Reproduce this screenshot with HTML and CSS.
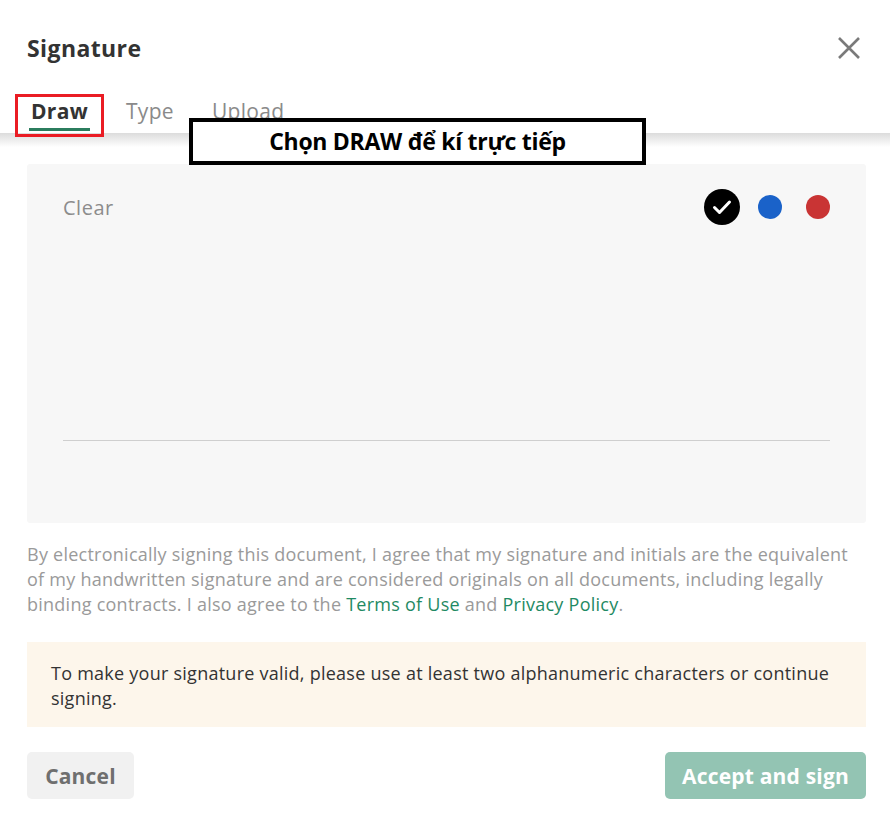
FILE: index.html
```html
<!DOCTYPE html>
<html>
<head>
<meta charset="utf-8">
<link rel="stylesheet" href="styles.css">
</head>
<body>
<div class="dialog">
  <div class="header">
    <h1 class="title">Signature</h1>
    <button class="close" aria-label="Close">
      <svg width="24" height="24" viewBox="0 0 24 24"><path d="M2 2 L22 22 M22 2 L2 22" stroke="#7a7a7a" stroke-width="2.6" fill="none"/></svg>
    </button>
  </div>
  <div class="tabs">
    <div class="tab active">Draw</div>
    <div class="tab">Type</div>
    <div class="tab">Upload</div>
    <div class="note-red"></div>
    <div class="note-box">Chọn DRAW để kí trực tiếp</div>
  </div>
  <div class="tab-shadow"></div>
  <div class="content">
    <div class="pad">
      <div class="pad-top">
        <span class="clear">Clear</span>
        <div class="colors">
          <span class="slot"><span class="dot black"><svg width="36" height="36" viewBox="0 0 36 36"><path d="M10.5 18.5 L15.5 23.5 L25.5 13" stroke="#fff" stroke-width="3" fill="none" stroke-linecap="round" stroke-linejoin="round"/></svg></span></span>
          <span class="slot"><span class="dot blue"></span></span>
          <span class="slot"><span class="dot red"></span></span>
        </div>
      </div>
      <div class="line"></div>
    </div>
    <p class="legal">By electronically signing this document, I agree that my signature and initials are the equivalent of my handwritten signature and are considered originals on all documents, including legally binding contracts. I also agree to the <a>Terms of Use</a> and <a>Privacy Policy</a>.</p>
    <div class="warn">To make your signature valid, please use at least two alphanumeric characters or continue signing.</div>
    <div class="actions">
      <button class="btn cancel">Cancel</button>
      <button class="btn accept">Accept and sign</button>
    </div>
  </div>
</div>
</body>
</html>
```
FILE: styles.css
```css
* { box-sizing: border-box; }
html, body { margin: 0; padding: 0; background: #fff; }
body {
  font-family: "Open Sans", "Noto Sans", sans-serif;
  color: #333;
  width: 890px;
  height: 826px;
  overflow: hidden;
}
.dialog { position: relative; }
.header {
  display: flex;
  justify-content: space-between;
  align-items: flex-start;
  padding: 33px 29px 0 27px;
}
.title {
  margin: 0;
  font-size: 23px;
  font-weight: 700;
  letter-spacing: 0.4px;
  line-height: 30px;
  color: #333;
}
.close {
  border: 0;
  background: none;
  padding: 0;
  margin-top: 3px;
  width: 24px;
  height: 24px;
}
.tabs {
  position: relative;
  display: flex;
  gap: 34px;
  padding: 0 0 0 29px;
  margin-top: 28px;
  height: 42px;
}
.tab {
  font-size: 21px;
  letter-spacing: 0.3px;
  line-height: 30px;
  color: #8a8a8a;
  padding: 5px 2px 0;
  height: 42px;
}
.tab.active {
  font-weight: 700;
  color: #333;
  border-bottom: 3px solid #2b7d5e;
  height: 40px;
}
.tab-shadow {
  height: 14px;
  background: linear-gradient(#dcdcdc, #ffffff);
}
.note-red {
  position: absolute;
  left: 15px;
  top: 3px;
  width: 89px;
  height: 43px;
  border: 3px solid #ea1c24;
}
.note-box {
  position: absolute;
  left: 189px;
  top: 27px;
  width: 457px;
  height: 47px;
  border: 4px solid #000;
  background: #fff;
  font-family: "Open Sans", sans-serif;
  font-weight: 700;
  font-size: 23px;
  color: #000;
  text-align: center;
  line-height: 38px;
  letter-spacing: -0.3px;
  z-index: 2;
}
.content { padding: 17px 24px 0 27px; }
.pad {
  background: #f7f7f7;
  border-radius: 3px;
  height: 359px;
  padding: 25px 30px 0 36px;
}
.pad-top {
  display: flex;
  justify-content: space-between;
  align-items: center;
}
.clear {
  font-size: 20px;
  letter-spacing: 0.5px;
  color: #8c8c8c;
}
.colors { display: flex; gap: 12px; }
.slot {
  width: 36px;
  height: 36px;
  display: flex;
  align-items: center;
  justify-content: center;
}
.dot { display: block; border-radius: 50%; width: 24px; height: 24px; }
.dot.black { width: 36px; height: 36px; background: #000; }
.dot.black svg { display: block; }
.dot.blue { background: #1a62c9; }
.dot.red { background: #c93434; }
.line {
  margin-top: 215px;
  margin-right: 6px;
  height: 1px;
  background: #cfcfcf;
}
.legal {
  margin: 19px 0 0;
  font-size: 18px;
  letter-spacing: 0.25px;
  line-height: 25px;
  color: #9a9a9a;
}
.legal a { color: #1f8a63; }
.warn {
  margin-top: 25px;
  background: #fdf6eb;
  padding: 19px 24px 16px;
  font-size: 18px;
  letter-spacing: 0.25px;
  line-height: 25px;
  color: #333;
  height: 85px;
}
.actions {
  display: flex;
  justify-content: space-between;
  margin-top: 25px;
}
.btn {
  border: 0;
  border-radius: 5px;
  height: 47px;
  font-family: inherit;
  font-size: 21px;
  font-weight: 700;
  letter-spacing: 0.2px;
  padding: 0;
}
.cancel { background: #f1f1f1; color: #6f6f6f; width: 107px; }
.accept { background: #93c4b3; color: #fff; width: 201px; }
```
